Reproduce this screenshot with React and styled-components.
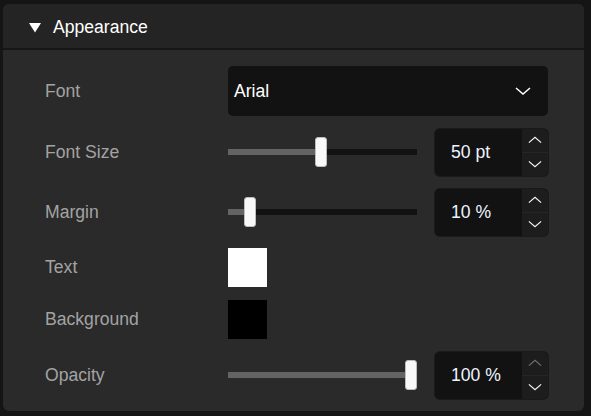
import React, { useState } from 'react';
import styled, { createGlobalStyle } from 'styled-components';

const GlobalStyle = createGlobalStyle`
  html, body {
    margin: 0;
    padding: 0;
    background: #151515;
    font-family: "Liberation Sans", Arial, sans-serif;
  }
  #root {
    padding-top: 4px;
  }
`;

const Panel = styled.div`
  margin: 0 7px 0 3px;
  width: 581px;
  height: 407px;
  border-radius: 6px;
  overflow: hidden;
  background: #2a2a2a;
  display: flex;
  flex-direction: column;
`;

const Header = styled.div`
  height: 46px;
  box-sizing: border-box;
  padding: 2px 0 0 25px;
  display: flex;
  align-items: center;
  gap: 11px;
  background: #242424;
  border-bottom: 2px solid #161616;
  color: #fff;
  font-size: 17.6px;
  flex-shrink: 0;
`;

const Body = styled.div`
  display: grid;
  grid-template-columns: 183px 1fr;
  row-gap: 12.8px;
  align-items: center;
  padding: 16px 36px 13px 42px;
`;

const Label = styled.div`
  color: #a3a3a3;
  font-size: 17.6px;
`;

const Select = styled.div`
  height: 50px;
  border-radius: 5px;
  background: #121212;
  display: flex;
  align-items: center;
  justify-content: space-between;
  padding: 0 17px 0 6px;
  color: #fff;
  font-size: 17.6px;
`;

const Controls = styled.div`
  display: flex;
  align-items: center;
  gap: 18px;
`;

const Track = styled.div`
  position: relative;
  width: 189px;
  height: 6px;
  background: #121212;
`;

const Fill = styled.div`
  height: 100%;
  background: #636363;
`;

const Thumb = styled.div`
  position: absolute;
  top: -12px;
  width: 10px;
  height: 28px;
  border-radius: 3px;
  background: #f8f8f8;
  border: 1px solid #bdbdbd;
  box-sizing: content-box;
  margin-left: -1px;
`;

const NumberBox = styled.div`
  width: 113px;
  height: 47px;
  border-radius: 5px;
  background: #121212;
  display: flex;
  overflow: hidden;
  box-shadow: 0 0 0 1px #1a1a1a;
`;

const Value = styled.div`
  flex: 1;
  display: flex;
  align-items: center;
  padding-left: 16px;
  color: #eef4ff;
  font-size: 17.6px;
`;

const Spinner = styled.div`
  width: 26px;
  background: #1d1d1d;
  display: flex;
  flex-direction: column;
`;

const SpinButton = styled.div`
  flex: 1;
  display: flex;
  align-items: center;
  justify-content: center;
  color: ${(p) => (p.$disabled ? '#6e6e6e' : '#f2f2f2')};
  & + & {
    border-top: 1px solid #262626;
  }
`;

const Swatch = styled.div`
  width: 39px;
  height: 39px;
  background: ${(p) => p.$color};
`;

const Caret = () => (
  <svg width="14" height="11" viewBox="0 0 14 11">
    <path d="M1 1 L13 1 L7 10.5 Z" fill="#fff" />
  </svg>
);

const Chevron = ({ up, width = 16 }) => (
  <svg width={width} height="8" viewBox="0 0 16 8" fill="none">
    <path
      d={up ? 'M1 7 L8 1 L15 7' : 'M1 1 L8 7 L15 1'}
      stroke="currentColor"
      strokeWidth="1.5"
    />
  </svg>
);

const Slider = ({ value, max }) => {
  const pct = value / max;
  const left = pct * 178;
  return (
    <Track>
      <Fill style={{ width: left + 4 }} />
      <Thumb style={{ left }} />
    </Track>
  );
};

const NumberInput = ({ value, unit, max }) => (
  <NumberBox>
    <Value>
      {value} {unit}
    </Value>
    <Spinner>
      <SpinButton $disabled={value >= max}>
        <Chevron up width={14} />
      </SpinButton>
      <SpinButton>
        <Chevron width={14} />
      </SpinButton>
    </Spinner>
  </NumberBox>
);

export default function App() {
  const [fontSize] = useState(50);
  const [margin] = useState(10);
  const [opacity] = useState(100);

  return (
    <>
      <GlobalStyle />
      <Panel>
        <Header>
          <Caret />
          Appearance
        </Header>
        <Body>
          <Label>Font</Label>
          <Select>
            Arial
            <Chevron />
          </Select>

          <Label>Font Size</Label>
          <Controls>
            <Slider value={fontSize} max={101} />
            <NumberInput value={fontSize} unit="pt" max={200} />
          </Controls>

          <Label>Margin</Label>
          <Controls>
            <Slider value={margin} max={105} />
            <NumberInput value={margin} unit="%" max={100} />
          </Controls>

          <Label>Text</Label>
          <Swatch $color="#fff" />

          <Label>Background</Label>
          <Swatch $color="#000" />

          <Label>Opacity</Label>
          <Controls>
            <Slider value={opacity} max={100} />
            <NumberInput value={opacity} unit="%" max={100} />
          </Controls>
        </Body>
      </Panel>
    </>
  );
}
